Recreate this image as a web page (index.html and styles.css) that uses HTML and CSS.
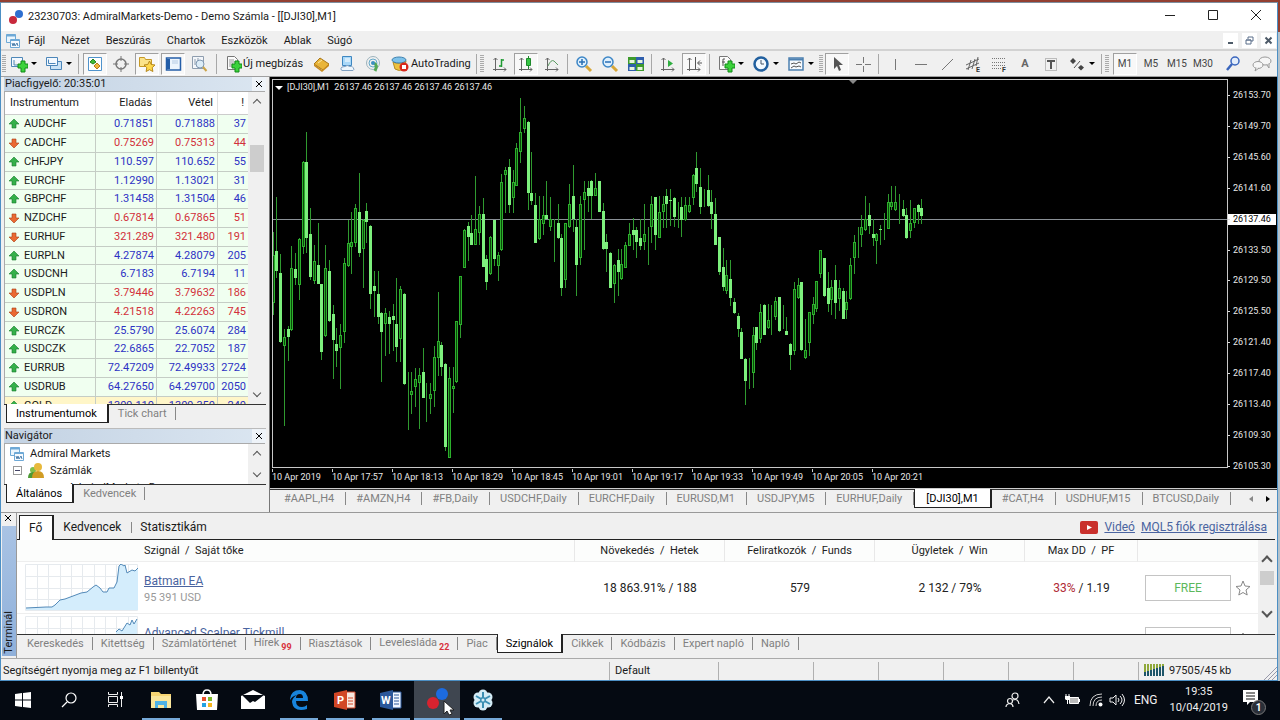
FILE: index.html
```html
<!DOCTYPE html>
<html lang="hu">
<head>
    <meta charset="UTF-8">
    <title>23230703: AdmiralMarkets-Demo - Demo Számla - [[DJI30],M1]</title>
    <link rel="stylesheet" href="styles.css">
</head>
<body>
<div class="window">
    <header class="titlebar">
        <svg class="logo" width="14" height="14"><circle cx="10" cy="4" r="4" fill="#2f6fd0"/><circle cx="4" cy="10" r="4" fill="#c8283c"/></svg>
        <span class="title">23230703: AdmiralMarkets-Demo - Demo Számla - [[DJI30],M1]</span>
        <div class="win-btns">
            <button aria-label="Minimize"><svg width="12" height="12"><path d="M1 6.500h10" stroke="#222"/></svg></button>
            <button aria-label="Maximize"><svg width="12" height="12"><path d="M1.500 1.500h9v9h-9z" fill="none" stroke="#222"/></svg></button>
            <button aria-label="Close"><svg width="12" height="12"><path d="M1 1l10 10M11 1L1 11" stroke="#222"/></svg></button>
        </div>
    </header>
    <nav class="menu">
        <svg class="menu-icon" width="14" height="14"><use href="#i-charts"/></svg>
        <a href="#">Fájl</a><a href="#">Nézet</a><a href="#">Beszúrás</a><a href="#">Chartok</a><a href="#">Eszközök</a><a href="#">Ablak</a><a href="#">Súgó</a>
        <div class="mdi-btns">
            <button aria-label="Minimize chart"><svg width="9" height="9"><path d="M2 7h5" stroke="#4d5a68" stroke-width="2"/></svg></button>
            <button aria-label="Restore chart"><svg width="9" height="9"><path d="M3 3V1h5v4H6M1 4h5v4H1zM1 4h5" fill="none" stroke="#5b6f8a"/></svg></button>
            <button aria-label="Close chart"><svg width="9" height="9"><path d="M1.500 1.500l6 6M7.500 1.500l-6 6" stroke="#4d5a68" stroke-width="2"/></svg></button>
        </div>
    </nav>

    <div class="toolbar">
        <i class="grip"></i>
        <button class="tool drop" aria-label="New chart"><svg width="18" height="18"><path d="M1.500 2.500h11v9h-11zM4 5v5h6" fill="#f3f9ff" stroke="#4f88b8"/><path d="M8 9h3V6h4v3h3v4h-3v4h-4v-4H8z" fill="#3bd23b" stroke="#128a18"/></svg></button>
        <button class="tool drop" aria-label="Profiles"><svg width="18" height="18"><path d="M5.500 6.500h11v8h-11z" fill="#c9e2f6" stroke="#4c86b9"/><path d="M1.500 2.500h11v8h-11z" fill="#f3f9ff" stroke="#4c86b9"/><path d="M3.500 4.500v4h7" fill="none" stroke="#4c86b9"/></svg></button>
        <i class="sep"></i>
        <button class="tool on" aria-label="Market Watch"><svg width="18" height="18"><path d="M2.500 2.500h13v13h-13z" fill="#fff" stroke="#4f93cc"/><path d="M7 4l3 3-3 2-3-2z" fill="#3fbb36" stroke="#24831f"/><path d="M11 8l3 3-3 3-3-3z" fill="#f0b53c" stroke="#b8781b"/></svg></button>
        <button class="tool" aria-label="Data Window"><svg width="18" height="18"><g fill="none" stroke="#777"><circle cx="9" cy="9" r="5" stroke-width="1.500"/><path d="M9 1v5M9 12v5M1 9h5M12 9h5"/></g></svg></button>
        <button class="tool on" aria-label="Navigator"><svg width="18" height="18"><path d="M1.500 2.500h5l1 2h6v7h-12z" fill="#fbe38a" stroke="#c69926"/><path d="M11.500 6l1.700 3.500 3.800.5-2.800 2.700.7 3.800-3.400-1.800-3.400 1.800.7-3.800L6 10l3.800-.5z" fill="#ffd94d" stroke="#b6881c"/></svg></button>
        <button class="tool on" aria-label="Terminal"><svg width="18" height="18"><path d="M2.500 3h14v12h-14z" fill="#edf5fd" stroke="#245ea8" stroke-width="1.500"/><path d="M3 4h3v10H3z" fill="#245ea8"/><path d="M8 6h6M8 8h6" stroke="#b5cbe4"/></svg></button>
        <button class="tool" aria-label="Strategy Tester"><svg width="18" height="18"><path d="M2.500 1.500h11v12h-11z" fill="#f3f6fa" stroke="#8e9dae"/><path d="M5 4v6M8 3v5" stroke="#8e9dae"/><circle cx="10" cy="9" r="4" fill="#dcecf7" stroke="#7f97b0"/><path d="M13 12l3.500 4" stroke="#cba448" stroke-width="2"/></svg></button>
        <i class="sep wide"></i>
        <button class="tool text" aria-label="Új megbízás"><svg width="18" height="18"><path d="M3.500 1.500h7l3 3v10h-10z" fill="#fbfbfb" stroke="#777"/><path d="M5 5h5M5 7h6M5 9h4M5 11h3" stroke="#999"/><path d="M8 9h3V6h4v3h3v4h-3v4h-4v-4H8z" fill="#3bd23b" stroke="#128a18"/></svg><span>Új megbízás</span></button>
        <button class="tool" aria-label="MetaEditor"><svg width="18" height="18"><path d="M2 9l6-6 9 6-6 6z" fill="#e9b53a" stroke="#a87618"/><path d="M2 9v2l8 6 7-6V9l-7 6z" fill="#c98c20"/><path d="M6 8l4-3" stroke="#fbe9a6"/></svg></button>
        <button class="tool" aria-label="VPS"><svg width="18" height="18"><path d="M4.500 1.500h9v9h-9z" fill="#a9d8f8" stroke="#3e87c1"/><path d="M7 4h5M7 6h5" stroke="#fff"/><path d="M4 15.500h11q2-1 0-3-1-2-3-1-3-2-5 0-4 0-4 2 0 2 1 2z" fill="#eef6fc" stroke="#7f9fc0"/></svg></button>
        <button class="tool" aria-label="Signals"><svg width="18" height="18"><g fill="none" stroke="#9db3bd"><circle cx="9" cy="8" r="6.500"/><circle cx="9" cy="8" r="4" stroke="#64a9c9"/></g><path d="M10 8q4 2 1 8" fill="none" stroke="#54a854" stroke-width="3"/><circle cx="9" cy="8" r="2" fill="#3d8fc0"/></svg></button>
        <button class="tool text auto" aria-label="AutoTrading"><svg width="18" height="18"><path d="M2 7q6 3 13-1l-2 8q-5 3-9 0z" fill="#eec23f" stroke="#b68a20"/><ellipse cx="8" cy="5" rx="7" ry="3" fill="#7ec2ea" stroke="#3e82b0"/><circle cx="13" cy="12" r="4.500" fill="#d8281c"/><path d="M11 10h4v4h-4z" fill="#fff"/></svg><span>AutoTrading</span></button>
        <i class="sep"></i><i class="grip"></i>
        <button class="tool" aria-label="Bar chart"><svg width="18" height="18"><use href="#i-axes"/><path d="M10.500 4v8M10 5h3M8 11h3" stroke="#1f9a33" stroke-width="1.500"/></svg></button>
        <button class="tool on" aria-label="Candlesticks"><svg width="18" height="18"><use href="#i-axes"/><path d="M11.500 1v13" stroke="#1f8a2c"/><path d="M9.500 3.500h4v7h-4z" fill="#35c544" stroke="#1f8a2c"/></svg></button>
        <button class="tool" aria-label="Line chart"><svg width="18" height="18"><use href="#i-axes"/><path d="M5 11Q8 4 11 6l4 4" fill="none" stroke="#5c9a62"/></svg></button>
        <i class="sep"></i>
        <button class="tool" aria-label="Zoom in"><svg width="18" height="18"><use href="#i-lens"/><path d="M7 4v6M4 7h6" stroke="#2a6fb4" stroke-width="1.500"/></svg></button>
        <button class="tool" aria-label="Zoom out"><svg width="18" height="18"><use href="#i-lens"/><path d="M4 7h6" stroke="#2a6fb4" stroke-width="1.500"/></svg></button>
        <button class="tool" aria-label="Tile windows"><svg width="18" height="18"><path d="M1 2h8v7H1zM9 9h8v7H9z" fill="#3d9a2c"/><path d="M9 2h8v7H9zM1 9h8v7H1z" fill="#2e5eac"/><path d="M2.500 5h5v3h-5zM10.500 5h5v3h-5zM2.500 12h5v3h-5zM10.500 12h5v3h-5z" fill="#e8f4dd"/></svg></button>
        <i class="sep"></i>
        <button class="tool" aria-label="Auto scroll"><svg width="18" height="18"><use href="#i-axes"/><path d="M9 5l5 3.500L9 12z" fill="#2fae40"/></svg></button>
        <button class="tool on" aria-label="Chart shift"><svg width="18" height="18"><use href="#i-axes"/><path d="M10.500 2v12M17 8h-4M15 5.500L12.500 8l2.500 2.500" fill="none" stroke="#555"/></svg></button>
        <i class="sep"></i>
        <button class="tool drop" aria-label="Indicators"><svg width="18" height="18"><path d="M2.500 1.500h8l3 3v10h-11z" fill="#fbfbfb" stroke="#777"/><path d="M8 4H6v7M5 7h3" fill="none" stroke="#555"/><path d="M8 9h3V6h4v3h3v4h-3v4h-4v-4H8z" fill="#3bd23b" stroke="#128a18"/></svg></button>
        <button class="tool drop" aria-label="Periods"><svg width="18" height="18"><circle cx="9" cy="9" r="6.500" fill="#f4faff" stroke="#22609f" stroke-width="2.500"/><path d="M9 5v4h3" fill="none" stroke="#456"/></svg></button>
        <button class="tool drop" aria-label="Templates"><svg width="18" height="18"><path d="M2 3h14v12H2z" fill="#f7fbff" stroke="#4c80b0" stroke-width="1.500"/><path d="M2 4.500h14" stroke="#4c80b0" stroke-width="2"/><path d="M4 9l3-1 2 1 3-2 2 1M4 13l3-2 2 1 3-1 2 1" fill="none" stroke="#555"/></svg></button>
        <i class="grip near"></i>
        <button class="tool on" aria-label="Cursor"><svg width="18" height="18"><path d="M6 2v12l3-3 2 5 2-1-2-5h4z" fill="#555"/></svg></button>
        <button class="tool" aria-label="Crosshair"><svg width="18" height="18"><path d="M9.500 2v6M9.500 11v6M2 9.500h6M11 9.500h6" stroke="#777"/></svg></button>
        <i class="sep"></i>
        <button class="tool" aria-label="Vertical line"><svg width="18" height="18"><path d="M9.500 4v11" stroke="#777"/></svg></button>
        <button class="tool" aria-label="Horizontal line"><svg width="18" height="18"><path d="M3 9.500h12" stroke="#777"/></svg></button>
        <button class="tool" aria-label="Trendline"><svg width="18" height="18"><path d="M4 15L15 4" stroke="#777"/></svg></button>
        <button class="tool" aria-label="Channel"><svg width="18" height="18"><path d="M2 10L15 4M2 14L15 8M4 15l3-10M8 14l3-10M12 11l2-9" stroke="#666"/><text x="12" y="17" class="tiny">E</text></svg></button>
        <button class="tool" aria-label="Fibonacci"><svg width="18" height="18"><path d="M2 3.500h13M2 7.500h13M2 10.500h13M2 13.500h9" stroke="#777" stroke-dasharray="1 1"/><text x="12" y="17" class="tiny">F</text></svg></button>
        <button class="tool letter">A</button>
        <button class="tool" aria-label="Text label"><svg width="18" height="18"><path d="M3.500 3.500h11v12h-11z" fill="none" stroke="#888" stroke-dasharray="1 1"/><path d="M5 6h8M9 6v8" stroke="#555" stroke-width="2"/></svg></button>
        <button class="tool drop" aria-label="Arrows"><svg width="18" height="18"><path d="M5 3l3 3-3 3-3-3zM13 10l3 2.500-3 3-3-3z" fill="#444"/><path d="M6 13l6-7" stroke="#555"/></svg></button>
        <i class="sep"></i><i class="grip"></i>
        <button class="tool on period">M1</button><button class="tool period">M5</button><button class="tool period">M15</button><button class="tool period">M30</button>
        <div class="toolbar-end">
            <button class="tool" aria-label="Search"><svg width="18" height="18"><circle cx="11" cy="6" r="4" fill="#e4eefb" stroke="#3a66bd" stroke-width="1.500"/><path d="M8 9l-5 6" stroke="#3a66bd" stroke-width="2.500"/></svg></button>
            <button class="tool" aria-label="Chat"><svg width="20" height="18"><g fill="#f6f6f6" stroke="#999"><ellipse cx="13" cy="6" rx="6" ry="4"/><path d="M15 10l2 3 0-4"/><ellipse cx="6" cy="10" rx="5" ry="3.500"/><path d="M4 13l-1 3 4-3"/></g></svg></button>
        </div>
    </div>

    <div class="workspace">
        <aside class="side">
            <section class="panel watch">
                <h2 class="panel-title">Piacfigyelő: 20:35:01<button class="x" aria-label="Close"></button></h2>
                <div class="panel-body">
                    <div class="watch-list">
                        <table class="quotes">
                            <colgroup><col><col class="c-bid"><col class="c-ask"><col class="c-spread"></colgroup>
                            <thead><tr><th>Instrumentum</th><th>Eladás</th><th>Vétel</th><th>!</th></tr></thead>
                            <tbody id="quotes"></tbody>
                        </table>
                    </div>
                    <div class="scroll"><i class="up"></i><i class="thumb"></i><i class="down"></i></div>
                </div>
                <div class="tabs"><button class="tab active">Instrumentumok</button><button class="tab">Tick chart</button></div>
            </section>
            <section class="panel navigator">
                <h2 class="panel-title">Navigátor<button class="x" aria-label="Close"></button></h2>
                <div class="panel-body">
                    <ul class="tree">
                        <li><svg width="14" height="14"><use href="#i-charts"/></svg>Admiral Markets</li>
                        <li class="lvl1"><i class="box"></i><svg width="16" height="16"><circle cx="5" cy="7" r="3" fill="#7fbf4a"/><path d="M0 15q0-6 5-6t5 6z" fill="#4d9a34"/><circle cx="10" cy="4" r="4" fill="#e8b93c"/><path d="M4 15q0-7 6-7t6 7z" fill="#d19c24"/></svg>Számlák</li>
                        <li class="lvl2"><svg width="12" height="14"><path d="M1 3h10v9H1z" fill="#3f91cd"/></svg>AdmiralMarkets-Demo</li>
                    </ul>
                    <div class="scroll"><i class="up"></i><i class="down"></i></div>
                </div>
                <div class="tabs"><button class="tab active">Általános</button><button class="tab">Kedvencek</button></div>
            </section>
        </aside>

        <main class="chart-area">
            <div class="chart">
                <div class="plot">
                    <svg id="candles" width="100%" height="100%"></svg>
                    <p class="ohlc"><i class="caret"></i>[DJI30],M1&nbsp; 26137.46 26137.46 26137.46 26137.46</p>
                    <i class="shift-mark"></i>
                </div>
                <ol class="prices" id="prices"></ol>
                <ol class="times" id="times"></ol>
            </div>
            <div class="tabs chart-tabs">
                <button class="tab">#AAPL,H4</button><button class="tab">#AMZN,H4</button><button class="tab">#FB,Daily</button><button class="tab">USDCHF,Daily</button><button class="tab">EURCHF,Daily</button><button class="tab">EURUSD,M1</button><button class="tab">USDJPY,M5</button><button class="tab">EURHUF,Daily</button><button class="tab active">[DJI30],M1</button><button class="tab">#CAT,H4</button><button class="tab">USDHUF,M15</button><button class="tab">BTCUSD,Daily</button>
                <span class="tab-nav"><button class="prev" aria-label="Previous"></button><button class="next" aria-label="Next"></button></span>
            </div>
        </main>
    </div>

    <section class="terminal">
        <div class="strip"><button class="x" aria-label="Close"></button><span>Terminál</span></div>
        <div class="terminal-main">
            <div class="sub-tabs">
                <button class="active">Fő</button><button>Kedvencek</button><button>Statisztikám</button>
                <div class="links">
                    <svg width="18" height="13"><rect width="18" height="13" rx="2" fill="#c9302c"/><path d="M7 4l5 2.500L7 9z" fill="#fff"/></svg>
                    <a href="#">Videó</a><a href="#">MQL5 fiók regisztrálása</a>
                </div>
            </div>
            <div class="signals">
                <div class="signal-list">
                    <table>
                        <colgroup><col class="c-spark"><col><col class="c-num"><col class="c-num"><col class="c-num"><col class="c-dd"><col class="c-act"></colgroup>
                        <thead><tr><th></th><th class="name">Szignál &nbsp;/ &nbsp;Saját tőke</th><th>Növekedés &nbsp;/ &nbsp;Hetek</th><th>Feliratkozók &nbsp;/ &nbsp;Funds</th><th>Ügyletek &nbsp;/ &nbsp;Win</th><th>Max DD &nbsp;/ &nbsp;PF</th><th></th></tr></thead>
                        <tbody>
                        <tr>
                            <td class="spark"><svg width="114" height="47"><use href="#i-grid"/><path d="M1 44l20-1h6l3-2 5-5 5-1 8-3 8-3 6-1 6-5 3-2 4 3 3 4h4l2-4h5l3-6 2-16 2-2 3 2 1-1 2 8 5-3 3 1 3-3V46H1z" fill="#d4edfc"/><path d="M1 44l20-1h6l3-2 5-5 5-1 8-3 8-3 6-1 6-5 3-2 4 3 3 4h4l2-4h5l3-6 2-16 2-2 3 2 1-1 2 8 5-3 3 1 3-3" fill="none" stroke="#5289b8"/></svg></td>
                            <td class="name"><a href="#">Batman EA</a><small>95 391 USD</small></td>
                            <td>18 863.91% / 188</td><td>579</td><td>2 132 / 79%</td><td><em>33%</em> / 1.19</td>
                            <td class="act"><div><button class="free">FREE</button><svg width="16" height="16"><use href="#i-star"/></svg></div></td>
                        </tr>
                        <tr>
                            <td class="spark"><svg width="114" height="47"><use href="#i-grid"/><path d="M91 16l3-3 3 2 5-8 3 2 2-5 2 4 3-5v40H91z" fill="#d4edfc"/><path d="M91 16l3-3 3 2 5-8 3 2 2-5 2 4 3-5" fill="none" stroke="#5289b8"/></svg></td>
                            <td class="name"><a href="#">Advanced Scalper Tickmill</a></td>
                            <td></td><td></td><td></td><td></td>
                            <td class="act"><div><button class="free" aria-label="Subscribe"></button><svg width="16" height="16"><use href="#i-star"/></svg></div></td>
                        </tr>
                        </tbody>
                    </table>
                </div>
                <div class="scroll bold"><i class="up"></i><i class="thumb"></i><i class="down"></i></div>
            </div>
            <div class="tabs">
                <button class="tab">Kereskedés</button><button class="tab">Kitettség</button><button class="tab">Számlatörténet</button><button class="tab">Hírek<b>99</b></button><button class="tab">Riasztások</button><button class="tab">Levelesláda<b>22</b></button><button class="tab">Piac</button><button class="tab active">Szignálok</button><button class="tab">Cikkek</button><button class="tab">Kódbázis</button><button class="tab">Expert napló</button><button class="tab">Napló</button>
            </div>
        </div>
    </section>

    <footer class="status">
        <span class="hint">Segítségért nyomja meg az F1 billentyűt</span>
        <span class="cell profile">Default</span><span class="cell date"></span><span class="cell"></span><span class="cell"></span><span class="cell"></span><span class="cell"></span><span class="cell"></span>
        <span class="cell traffic"><svg width="22" height="13"><path d="M0 0h2v8H0zM3 0h2v7H3zM6 0h2v6H6zM9 0h2v5H9zM12 0h2v4h-2zM15 0h2v3h-2zM18 0h2v2h-2z" fill="#8fa83a"/><path d="M0 8h2v4H0zM3 7h2v5H3zM6 6h2v6H6zM9 5h2v7H9zM12 4h2v8h-2zM15 3h2v9h-2zM18 2h2v10h-2z" fill="#1d5569"/></svg>97505/45 kb</span>
        <svg class="resize" width="13" height="13"><path d="M0 13L13 0M4 13l9-9M8 13l5-5" stroke="#99a"/></svg>
    </footer>
</div>

<div class="taskbar">
    <button aria-label="Start"><svg width="16" height="16"><path d="M0 2l7-1v6.500H0zM8 1l8-1v7.500H8zM0 8.500h7V15l-7-1zM8 8.500h8V16l-8-1z" fill="#fff"/></svg></button>
    <button aria-label="Search"><svg width="16" height="16"><circle cx="10" cy="6" r="5" fill="none" stroke="#fff" stroke-width="1.200"/><path d="M6 10l-5 5" stroke="#fff" stroke-width="1.200"/></svg></button>
    <button aria-label="Task View"><svg width="17" height="16"><path d="M1.500 4.500h9v6h-9zM1.500 0v2.500h9V0M1.500 15v-2.500h9V15M14.500 0v15" fill="none" stroke="#eee"/><path d="M13 4h3v3h-3z" fill="#fff"/></svg></button>
    <button class="open" aria-label="File Explorer"><svg width="20" height="18"><path d="M0 1h8l2 2h10v14H0z" fill="#f6d573"/><path d="M0 5h20v12H0z" fill="#fae69c"/><path d="M4 10h12v7h-3v-3H7v3H4z" fill="#4fb2e5"/></svg></button>
    <button aria-label="Store"><svg width="22" height="22"><path d="M7 6q0-5 4-5t4 5" fill="none" stroke="#fff" stroke-width="1.500"/><path d="M0 5h22l-1 16H1z" fill="#fff"/><path d="M6 8h4v4H6z" fill="#e8502c"/><path d="M12 8h4v4h-4z" fill="#7db928"/><path d="M6 14h4v4H6z" fill="#23a2e3"/><path d="M12 14h4v4h-4z" fill="#f7b51d"/></svg></button>
    <button aria-label="Mail"><svg width="24" height="19"><path d="M0 6l12-6 12 6v13H0z" fill="#fff"/><path d="M1 5h22l-9 7-2-1-3 2z" fill="#050a12"/></svg></button>
    <button class="open" aria-label="Edge"><svg width="20" height="20" viewBox="0 0 20 20"><path d="M1 9Q2 0 11 0q8 1 8 11H7q0 6 6 6 3 0 5-2v4q-3 1-6 1-8 0-9-8 0-4 5-7-5 1-7 5zm6-1h7q0-4-3-4-4 0-4 4z" fill="#1884dc" fill-rule="evenodd"/></svg></button>
    <button class="open" aria-label="PowerPoint"><svg width="22" height="20"><path d="M10 2h11v16H10z" fill="#f8e8e0" stroke="#d24726"/><path d="M14 8h5M14 11h5M14 14h5" stroke="#d24726"/><path d="M0 3l13-3v20L0 17z" fill="#d24726"/><text x="3" y="14" class="app">P</text></svg></button>
    <button class="open" aria-label="Word"><svg width="22" height="20"><path d="M10 2h11v16H10z" fill="#f0f5ff" stroke="#2b579a"/><path d="M14 5h5M14 8h5M14 11h5M14 14h5" stroke="#2b579a"/><path d="M0 3l13-3v20L0 17z" fill="#2b579a"/><text x="1" y="14" class="app">W</text></svg></button>
    <button class="open current" aria-label="MetaTrader"><svg width="34" height="32"><circle cx="22" cy="10" r="6" fill="#1c6be0"/><circle cx="13" cy="19" r="6" fill="#d8232f"/><path d="M24 17v13l3-3 2 4 3-1-2-4h4z" fill="#fff" stroke="#222"/></svg></button>
    <button class="open" aria-label="GoToMeeting"><svg width="22" height="22"><g fill="#d4ecf6"><circle cx="11" cy="5" r="4.500"/><circle cx="16" cy="8" r="4.500"/><circle cx="16" cy="14" r="4.500"/><circle cx="11" cy="17" r="4.500"/><circle cx="6" cy="14" r="4.500"/><circle cx="6" cy="8" r="4.500"/></g><path d="M11 3v16M4 7l14 8M18 7L4 15" stroke="#3b8fb3" stroke-width="2"/><circle cx="11" cy="11" r="3" fill="#3b8fb3"/><circle cx="11" cy="11" r="1.500" fill="#d4ecf6"/></svg></button>
    <div class="tray">
        <svg width="16" height="16"><g fill="none" stroke="#eee" stroke-width="1.200"><circle cx="10" cy="4" r="3"/><circle cx="5" cy="9" r="2.500"/><path d="M1 15q0-3 4-3.500 3 .5 3 3.500M8 8q5-2 6 4"/></g></svg>
        <svg class="chev" width="12" height="12"><path d="M1 9l5-6 5 6" fill="none" stroke="#eee" stroke-width="1.200"/></svg>
        <svg class="batt" width="16" height="12"><path d="M5.500 3.500h9v6h-9z" fill="#bbb" stroke="#fff"/><path d="M15 5h1v3h-1zM1 2h5v3l-1 1H2L1 5z" fill="#fff"/><path d="M2 0v2M5 0v2M3.500 6v4" stroke="#fff"/></svg>
        <svg class="wifi" width="14" height="14"><g fill="none" stroke="#ccc"><path d="M1 13Q1 1 13 1M4 13q0-9 9-9M7 13q0-6 6-6"/></g><circle cx="11.500" cy="11.500" r="2" fill="#fff"/></svg>
        <svg class="vol" width="16" height="14"><g fill="none" stroke="#eee"><path d="M1 5h3l3-3v10L4 9H1zM9 5q2 2 0 4M11 3q4 4 0 8M13 1q5 6 0 12"/></g></svg>
        <span class="lang">ENG</span>
        <time class="clock">19:35<br>10/04/2019</time>
        <button class="notice" aria-label="Notifications"><svg width="24" height="24"><path d="M1 2h15v12H8l-3 3v-3H1z" fill="#fff"/><path d="M4 5h9M4 8h9M4 11h9" stroke="#111"/></svg><b>1</b></button>
    </div>
</div>

<svg class="defs" width="0" height="0">
    <symbol id="i-charts" viewBox="0 0 14 14"><path d="M.5.5h9v8h-9z" fill="#eaf5fd" stroke="#6ea9d6"/><path d="M.5 1.500h9" stroke="#6ea9d6" stroke-width="2"/><path d="M4.500 5.500h9v8h-9z" fill="#f7fbff" stroke="#6ea9d6"/><path d="M4.500 6.500h9" stroke="#6ea9d6"/><path d="M6 9l1 3 1-3 1 3 2-3 1 3" fill="none" stroke="#4f81ad"/></symbol>
    <symbol id="i-axes" viewBox="0 0 18 18"><path d="M4.500 3v13M2 14.500h13M2.500 5l2-2 2 2M13 12.500l2 2-2 2" fill="none" stroke="#666"/></symbol>
    <symbol id="i-lens" viewBox="0 0 18 18"><path d="M11 11l5 5" stroke="#d8a738" stroke-width="3"/><circle cx="7" cy="7" r="5" fill="#dff0fd" stroke="#3d86c6" stroke-width="1.500"/></symbol>
    <symbol id="i-grid" viewBox="0 0 114 47"><path d="M.5.5h112v46H.5zM12.500 0v47M23.500 0v47M35.500 0v47M46.500 0v47M57.500 0v47M69.500 0v47M80.500 0v47M91.500 0v47M103.500 0v47M0 12.500h113M0 24.500h113M0 35.500h113" fill="none" stroke="#e6eaee"/></symbol>
    <symbol id="i-star" viewBox="0 0 16 16"><path d="M8 1l2 5 5 .5-4 3.500 1.200 5L8 12.500 3.800 15 5 10 1 6.500 6 6z" fill="none" stroke="#888"/></symbol>
</svg>

<script src="app.js"></script>
</body>
</html>
```
FILE: styles.css
```css
* {
    box-sizing: border-box;
    margin: 0;
    padding: 0;
}
body {
    height: 100vh;
    min-height: 640px;
    display: flex;
    flex-direction: column;
    padding-top: 2px;
    background: linear-gradient(#933f31 32px, #b4c2cc 32px);
    font: 11px/14px Roboto, "Open Sans", sans-serif;
    color: #1a1a1a;
    overflow: hidden;
}
button {
    border: none;
    background: none;
    font: inherit;
    color: inherit;
}
ul, ol {
    list-style: none;
}
a {
    color: #4a64a0;
}
.window {
    flex: 1;
    min-height: 0;
    display: flex;
    flex-direction: column;
    margin-right: 2px;
    border: 1px solid #4c8fc4;
    border-top-color: #7d8fa0;
    background: #f0f0f0;
}
.defs {
    position: absolute;
}

/* title and menu */
.titlebar {
    display: flex;
    align-items: center;
    height: 28px;
    padding-left: 8px;
    background: #fff;
}
.title {
    flex: 1;
    margin-left: 5px;
}
.win-btns {
    display: flex;
}
.win-btns button {
    width: 43px;
    height: 28px;
}
.menu {
    display: flex;
    align-items: center;
    height: 20px;
    padding: 1px 0 0 5px;
    border-bottom: 2px solid #d2d2d2;
}
.menu a {
    margin-right: 16px;
    color: #1a1a1a;
    text-decoration: none;
}
.menu-icon {
    margin-right: 8px;
}
.mdi-btns {
    display: flex;
    gap: 4px;
    margin-left: auto;
    margin-right: 1px;
}
.mdi-btns button {
    width: 15px;
    height: 15px;
    background: #fff;
}
.mdi-btns svg {
    display: block;
    margin: 0 auto;
}

/* toolbar */
.toolbar {
    display: flex;
    align-items: center;
    height: 26px;
    padding-left: 1px;
    border-bottom: 1px solid #a0a0a0;
    background: #f0f0f0;
}
.grip {
    width: 4px;
    height: 18px;
    background: repeating-linear-gradient(#aaa 0 1px, #f0f0f0 1px 2px);
}
.grip.near {
    margin: 0 1px;
}
.sep {
    width: 1px;
    height: 20px;
    margin: 0 3px 0 2px;
    background: #a8a8a8;
}
.sep.wide {
    margin: 0 3px 0 4px;
}
.sep + .grip {
    margin-right: 3px;
}
.tool {
    flex: none;
    width: 26px;
    height: 22px;
    display: flex;
    align-items: center;
    justify-content: center;
    border: 1px solid transparent;
}
.tool.on {
    width: 24px;
    margin: 0 1px;
    background: #f8f8f8;
    border-color: #a0a0a0 #fff #fff #a0a0a0;
}
.tool.drop {
    width: 35px;
    gap: 3px;
}
.tool.drop::after {
    content: "";
    border: 3px solid transparent;
    border-top: 3px solid #000;
    border-bottom: none;
}
.tool.text {
    width: 88px;
    padding-left: 3px;
    justify-content: flex-start;
    gap: 1px;
    white-space: nowrap;
}
.tool.auto {
    padding-left: 4px;
    gap: 2px;
}
.tool.letter {
    font-weight: bold;
    color: #666;
}
.tool.period {
    font-size: 10px;
    color: #444;
}
.toolbar-end {
    display: flex;
    gap: 3px;
    margin-left: auto;
    margin-right: 2px;
}
.tiny {
    font: bold 7px Roboto, sans-serif;
    fill: #333;
}

/* side panels */
.workspace {
    flex: 1;
    min-height: 0;
    display: flex;
}
.side {
    flex: none;
    width: 265px;
    padding: 0 0 6px 3px;
    display: flex;
    flex-direction: column;
}
.panel {
    display: flex;
    flex-direction: column;
    min-height: 0;
}
.watch {
    flex: 1;
}
.navigator {
    height: 78px;
    margin-top: 2px;
    border-top: 1px solid #bbb;
}
.panel-title {
    display: flex;
    justify-content: space-between;
    align-items: center;
    flex: none;
    height: 14px;
    padding-left: 1px;
    background: linear-gradient(90deg, #c3d2e3, #dbe6f1);
    font-size: 11px;
    font-weight: normal;
}
.x {
    width: 14px;
    height: 14px;
    background:
        linear-gradient(45deg, transparent 42%, #000 42% 58%, transparent 58%) center / 6px 6px no-repeat,
        linear-gradient(-45deg, transparent 42%, #000 42% 58%, transparent 58%) center / 6px 6px no-repeat;
}
.panel-title .x {
    background-color: #eef3f8;
}
.panel-body {
    flex: 1;
    min-height: 0;
    display: flex;
    margin-right: 1px;
    border: 1px solid #aaa;
    border-right: none;
    border-bottom: none;
    background: #fff;
}
.watch-list {
    flex: 1;
    overflow: hidden;
}
.quotes {
    width: 100%;
    table-layout: fixed;
    border-collapse: separate;
    border-spacing: 0;
}
.c-bid, .c-ask {
    width: 61px;
}
.c-spread {
    width: 30px;
}
.quotes th {
    height: 23px;
    padding: 0 4px 0 0;
    border-right: 1px solid #e2e2e2;
    border-bottom: 1px solid #ccc;
    font-weight: normal;
    text-align: right;
}
.quotes th:first-child {
    padding-left: 5px;
    text-align: left;
}
.quotes td {
    height: 19px;
    padding-right: 2px;
    border-right: 1px solid #c5cdc5;
    border-bottom: 1px solid #c5cdc5;
    background: #f0fff0;
    color: #2d32c4;
    text-align: right;
}
.quotes tr:nth-child(4n) td {
    height: 18px;
}
.quotes td:first-child {
    padding-left: 4px;
    color: #1a1a1a;
    text-align: left;
}
.quotes td:last-child, .quotes th:last-child {
    border-right: none;
}
.quotes td svg {
    margin-right: 5px;
    vertical-align: -2px;
}
.quotes .down td:not(:first-child) {
    color: #d2303a;
}
.quotes .gold td {
    background: #fff6c8;
}
.scroll {
    flex: none;
    width: 17px;
    padding: 4px 0;
    display: flex;
    flex-direction: column;
    align-items: center;
    background: #f0f0f0;
}
.scroll .up, .scroll .down {
    width: 6px;
    height: 6px;
    border: solid #555;
    border-width: 1px 0 0 1px;
    transform: rotate(45deg);
    margin-top: 4px;
}
.scroll .down {
    margin: auto 0 4px;
    transform: rotate(225deg);
}
.scroll .thumb {
    width: 14px;
    height: 27px;
    margin-top: 39px;
    background: #cdcdcd;
}
.scroll.bold .up, .scroll.bold .down {
    width: 8px;
    height: 8px;
    border-width: 2px 0 0 2px;
}
.scroll.bold .up {
    margin-top: 13px;
}
.scroll.bold .down {
    margin-bottom: 14px;
}
.scroll.bold .thumb {
    height: 14px;
    margin-top: 6px;
}
.tree {
    flex: 1;
    overflow: hidden;
    padding: 1px 5px;
}
.tree li {
    display: flex;
    align-items: center;
    gap: 6px;
    height: 17px;
}
.tree .lvl1 {
    padding-left: 3px;
}
.tree .lvl2 {
    padding-left: 40px;
}
.tree .box {
    width: 9px;
    height: 9px;
    border: 1px solid #999;
    background: linear-gradient(#446, #446) center / 5px 1px no-repeat;
}

/* tabs */
.tabs {
    flex: none;
    display: flex;
    height: 22px;
    padding-left: 2px;
    border-top: 1px solid #333;
    color: #808080;
}
.tab {
    position: relative;
    height: 18px;
    padding: 0 9px;
    white-space: nowrap;
}
.tab::after {
    content: "";
    position: absolute;
    right: 0;
    top: 2px;
    height: 13px;
    border-right: 1px solid #888;
}
.tab.active {
    margin-top: -1px;
    height: 19px;
    border: 1px solid #222;
    border-top: none;
    border-right-width: 2px;
    background: #fff;
    color: #000;
    padding: 1px 8px 0;
}
.side .tab.active {
    padding: 1px 10px 0 9px;
}
.tab.active::after {
    display: none;
}
.tab b {
    display: inline-block;
    margin-left: 2px;
    vertical-align: -4px;
    font-size: 9px;
    line-height: 9px;
    color: #d8303c;
}

/* chart */
.chart-area {
    flex: 1;
    min-width: 0;
    margin-left: 3px;
    display: flex;
    flex-direction: column;
    border-left: 1px solid #777;
}
.chart {
    flex: 1;
    min-height: 0;
    display: grid;
    grid-template: 1fr 19px / 1fr 48px;
    padding: 2px 1px 1px 2px;
    background: #000;
    border-bottom: 1px solid #ccc;
    color: #e8e8e8;
    font-size: 9px;
    line-height: 11px;
}
.plot {
    position: relative;
    min-height: 0;
    border: 1px solid #c8c8c8;
    overflow: hidden;
}
#candles {
    display: block;
}
.ohlc {
    position: absolute;
    left: 2px;
    top: 2px;
    display: flex;
    align-items: center;
    gap: 4px;
}
.caret, .shift-mark {
    border: 4px solid transparent;
    border-top-color: #fff;
    border-bottom: none;
}
.shift-mark {
    position: absolute;
    right: 370px;
    top: 0;
    border-top-color: #888;
}
.prices {
    display: flex;
    flex-direction: column;
    justify-content: space-between;
    padding-top: 11px;
    margin-bottom: -4px;
}
.prices li {
    display: flex;
    align-items: center;
    white-space: nowrap;
}
.prices li::before {
    content: "";
    width: 2px;
    margin-right: 3px;
    border-top: 1px solid #ddd;
}
.prices .now {
    background: #fff;
    color: #000;
}
.times {
    grid-column: 1 / 3;
    display: flex;
}
.times li {
    flex: none;
    width: 60px;
    padding-top: 1px;
    white-space: nowrap;
}
.times li::before {
    content: "";
    display: block;
    height: 3px;
    border-left: 1px solid #ccc;
}
.chart-tabs {
    height: 23px;
    padding-left: 4px;
}
.chart-tabs .tab {
    padding: 0 12px 0 10px;
}
.chart-tabs .tab.active {
    padding: 1px 11px 0;
}
.tab-nav {
    margin-left: auto;
    display: flex;
    align-items: center;
    gap: 13px;
    height: 17px;
    padding-right: 7px;
}
.prev, .next {
    border: 3px solid transparent;
    border-right: 4px solid #888;
    border-left: none;
}
.next {
    border-left: 4px solid #000;
    border-right: none;
}

/* terminal */
.terminal {
    flex: none;
    display: flex;
    height: 146px;
    border-top: 1px solid #999;
}
.terminal .tabs {
    height: 24px;
}
.terminal .tab {
    padding-left: 8px;
}
.strip {
    width: 14px;
    margin: 0 0 2px 1px;
    display: flex;
    flex-direction: column;
    justify-content: space-between;
    background: linear-gradient(#f0f0f0 13px, #a9c3e4 13px, #8fb0da);
}
.strip .x {
    width: 12px;
    height: 10px;
}
.strip span {
    writing-mode: vertical-rl;
    transform: rotate(180deg);
    padding-top: 2px;
}
.terminal-main {
    flex: 1;
    min-width: 0;
    display: flex;
    flex-direction: column;
    border-left: 1px solid #999;
    margin-right: 2px;
}
.sub-tabs {
    flex: none;
    display: flex;
    align-items: center;
    height: 27px;
    padding: 2px 8px 0 2px;
    border-bottom: 1px solid #222;
    font-size: 12px;
}
.sub-tabs > button {
    height: 24px;
    padding: 0 10px 0 9px;
}
.sub-tabs > button.active {
    height: 25px;
    margin-bottom: -1px;
    border: 1px solid #222;
    border-right-width: 2px;
    border-bottom: none;
    background: #fff;
}
.sub-tabs > button + button + button {
    background: linear-gradient(#888, #888) left center / 1px 11px no-repeat;
}
.links {
    margin-left: auto;
    display: flex;
    align-items: center;
    gap: 6px;
}
.signals {
    flex: 1;
    min-height: 0;
    display: flex;
    background: #fff;
}
.signal-list {
    flex: 1;
    overflow: hidden;
}
.signals table {
    width: 100%;
    table-layout: fixed;
    border-collapse: separate;
    border-spacing: 0;
    color: #222;
}
.c-spark {
    width: 126px;
}
.c-num {
    width: 150px;
}
.c-dd {
    width: 113px;
}
.c-act {
    width: 120px;
}
.signals th {
    height: 22px;
    border-right: 1px solid #e8e8e8;
    border-bottom: 1px solid #eee;
    background: #fcfdfc;
    font-weight: normal;
}
.signals th:first-child, .signals th:last-child {
    border-right: none;
}
.signals td {
    height: 52px;
    border-bottom: 1px solid #eee;
    text-align: center;
    font-size: 12px;
}
.signals .name {
    text-align: left;
    padding-left: 1px;
}
.signals td.name {
    padding-top: 12px;
    vertical-align: top;
}
.signals .spark {
    padding-left: 8px;
    text-align: left;
}
.spark svg {
    display: block;
}
.name small {
    display: block;
    margin-top: 3px;
    font-size: 11px;
    color: #999;
}
.signals em {
    font-style: normal;
    color: #b02a35;
}
.act div {
    display: flex;
    align-items: center;
    gap: 4px;
    padding-left: 7px;
}
.free {
    width: 86px;
    height: 26px;
    border: 1px solid #c4c4c4;
    color: #5cb85c;
}

/* status */
.status {
    flex: none;
    display: flex;
    align-items: center;
    height: 22px;
    padding: 2px 0 0 2px;
    border-top: 1px solid #aaa;
    position: relative;
}
.hint {
    flex: 1;
}
.cell {
    width: 65px;
    height: 18px;
    padding-left: 5px;
    border-left: 1px solid #b0b0b0;
    line-height: 18px;
}
.cell.profile {
    width: 109px;
}
.cell.date {
    width: 95px;
}
.cell.traffic {
    display: flex;
    align-items: center;
    gap: 3px;
    width: 139px;
}
.resize {
    position: absolute;
    right: 0;
    bottom: 0;
}

/* taskbar */
.taskbar {
    flex: none;
    display: flex;
    height: 39px;
    background: #050a12;
    color: #f0f0f0;
}
.taskbar > button {
    width: 46px;
    padding-bottom: 2px;
    display: flex;
    align-items: center;
    justify-content: center;
}
.taskbar .open {
    padding: 0;
    border-bottom: 2px solid #76a9d8;
    background-clip: padding-box;
    width: 38px;
    margin: 0 4px;
}
.taskbar .current {
    width: 46px;
    margin: 0;
    background: #3f4650;
}
.app {
    font: bold 11px Roboto, sans-serif;
    fill: #fff;
}
.tray {
    margin-left: auto;
    display: flex;
    align-items: center;
    padding: 0 14px 2px 0;
}
.chev {
    margin-left: 22px;
}
.batt {
    margin-left: 9px;
}
.wifi {
    margin-left: 9px;
}
.vol {
    margin: 0 9px 0 6px;
}
.lang {
    font-size: 12px;
}
.clock {
    margin-left: 12px;
    line-height: 16px;
    text-align: center;
}
.notice {
    position: relative;
    margin-left: 14px;
    color: #fff;
}
.notice svg {
    display: block;
}
.notice b {
    position: absolute;
    right: 0;
    bottom: -3px;
    width: 15px;
    height: 15px;
    border: 1px solid #777;
    border-radius: 50%;
    background: #2a2f38;
    line-height: 13px;
    font-size: 10px;
}
```
FILE: app.js
```js
var quotes = [
    ["AUDCHF", "0.71851", "0.71888", 37, 1],
    ["CADCHF", "0.75269", "0.75313", 44, 0],
    ["CHFJPY", "110.597", "110.652", 55, 1],
    ["EURCHF", "1.12990", "1.13021", 31, 1],
    ["GBPCHF", "1.31458", "1.31504", 46, 1],
    ["NZDCHF", "0.67814", "0.67865", 51, 0],
    ["EURHUF", "321.289", "321.480", 191, 0],
    ["EURPLN", "4.27874", "4.28079", 205, 1],
    ["USDCNH", "6.7183", "6.7194", 11, 1],
    ["USDPLN", "3.79446", "3.79632", 186, 0],
    ["USDRON", "4.21518", "4.22263", 745, 0],
    ["EURCZK", "25.5790", "25.6074", 284, 1],
    ["USDCZK", "22.6865", "22.7052", 187, 1],
    ["EURRUB", "72.47209", "72.49933", 2724, 1],
    ["USDRUB", "64.27650", "64.29700", 2050, 1],
    ["GOLD", "1309.110", "1309.350", 240, 1]
];
var upIcon = '<svg width="10" height="10"><path d="M5 0l5 5H7v4H3V5H0z" fill="#35b04a" stroke="#187a2c" stroke-width=".6"/></svg>';
var downIcon = '<svg width="10" height="10"><path d="M5 10l5-5H7V1H3v4H0z" fill="#ea6a32" stroke="#a83c14" stroke-width=".6"/></svg>';
document.getElementById("quotes").innerHTML = quotes.map(function (q) {
    var cls = (q[4] ? "up" : "down") + (q[0] == "GOLD" ? " gold" : "");
    return '<tr class="' + cls + '"><td>' + (q[4] ? upIcon : downIcon) + q[0] + "</td><td>" + q[1] + "</td><td>" + q[2] + "</td><td>" + q[3] + "</td></tr>";
}).join("");

var prices = ["26153.70", "26149.70", "26145.60", "26141.60", "26137.46", "26133.50", "26129.50", "26125.50", "26121.40", "26117.40", "26113.40", "26109.30", "26105.30"];
document.getElementById("prices").innerHTML = prices.map(function (p, i) {
    return "<li" + (i == 4 ? ' class="now"' : "") + ">" + p + "</li>";
}).join("");

var times = ["2019", "17:57", "18:13", "18:29", "18:45", "19:01", "19:17", "19:33", "19:49", "20:05", "20:21"];
document.getElementById("times").innerHTML = times.map(function (t) {
    return "<li>10 Apr " + t + "</li>";
}).join("");

// high, low, body top, body bottom, 1 = rising
var bars = [
    [157,240,180,228,1],[122,203,176,196,0],[179,268,198,267,0],[254,351,262,271,1],[251,286,254,262,0],[171,256,193,255,1],[178,210,194,203,0],[163,225,164,210,1],
    [86,179,87,172,1],[57,178,87,163,0],[133,205,159,202,0],[170,209,186,206,1],[148,209,190,209,0],[209,285,209,277,0],[170,262,193,261,1],[185,247,196,246,0],
    [230,304,239,265,0],[253,292,269,276,0],[249,314,260,273,1],[183,268,188,257,1],[145,192,168,191,1],[137,199,167,172,1],[129,172,133,168,1],[98,182,137,178,0],
    [144,213,145,174,1],[128,168,136,147,0],[150,234,151,219,0],[196,242,211,216,0],[196,249,219,242,0],[237,307,238,257,0],[233,281,238,249,1],[236,279,242,249,0],
    [229,276,241,245,0],[203,287,249,272,0],[211,287,214,264,1],[218,310,219,309,0],[297,355,316,316,1],[297,339,316,320,1],[293,332,304,312,1],[293,354,300,308,1],
    [273,323,297,323,0],[308,347,330,330,1],[308,339,319,324,1],[271,332,282,316,1],[217,301,266,283,1],[267,301,270,292,0],[288,376,289,372,0],[292,383,303,383,1],
    [292,338,311,314,1],[246,308,246,307,1],[201,263,201,250,1],[154,193,155,193,1],[147,186,151,162,0],[140,170,158,170,0],[101,170,154,170,1],[131,170,139,158,1],
    [123,192,139,192,0],[180,215,184,207,0],[161,200,162,199,1],[145,191,145,184,0],[177,206,180,191,1],[99,176,107,175,1],[92,138,95,100,1],[84,138,92,130,0],
    [95,138,107,123,1],[68,111,73,111,1],[23,88,57,77,1],[31,58,43,54,1],[46,135,47,118,0],[77,130,118,126,0],[118,168,130,168,0],[121,165,144,164,1],
    [121,160,140,149,1],[106,144,140,144,0],[122,156,144,152,1],[144,187,152,152,1],[129,164,148,163,0],[159,221,163,213,0],[148,213,148,205,1],[109,153,129,152,1],
    [90,157,121,144,0],[144,221,152,190,0],[121,190,129,183,1],[106,175,117,125,1],[106,137,113,121,0],[105,144,106,121,0],[98,121,113,121,1],[106,137,106,137,0],
    [128,175,136,174,0],[159,197,167,174,0],[177,213,178,213,0],[189,228,190,209,1],[174,221,185,197,0],[174,205,189,204,1],[167,193,170,193,1],[148,171,159,171,1],
    [143,175,155,160,0],[152,183,155,167,0],[144,175,163,171,0],[129,175,159,167,1],[152,190,159,159,1],[121,168,129,152,1],[122,175,122,160,0],[121,163,137,163,1],
    [121,153,129,137,1],[114,153,121,129,0],[114,151,125,126,0],[122,152,123,142,0],[127,153,144,144,1],[122,162,132,145,0],[122,146,130,145,1],[122,138,130,137,1],
    [99,130,100,123,1],[77,117,93,109,0],[93,139,112,132,0],[114,132,123,123,1],[100,132,115,131,0],[115,154,127,139,0],[123,170,139,170,0],[162,200,162,197,0],
    [173,216,192,212,0],[185,219,200,216,1],[185,231,204,223,0],[223,239,227,238,0],[238,262,241,254,0],[253,284,257,284,0],[283,330,284,306,0],[283,314,298,298,1],
    [252,313,260,298,1],[252,275,252,268,0],[229,268,237,264,1],[229,260,230,260,0],[229,254,245,253,1],[230,260,238,238,1],[222,245,226,242,1],[222,257,222,256,0],
    [230,254,253,253,1],[242,260,256,260,0],[268,295,269,280,0],[207,280,214,276,1],[203,224,210,223,1],[207,276,207,275,0],[244,284,275,283,1],[237,281,237,268,1],
    [222,249,229,240,1],[206,237,206,234,1],[175,203,175,199,1],[183,222,183,221,0],[197,237,213,229,0],[205,240,212,225,1],[190,244,205,228,0],[205,236,213,224,1],
    [213,244,216,244,0],[216,244,227,235,1],[183,225,190,224,1],[160,199,167,183,1],[152,183,160,160,1],[140,172,152,160,1],[121,156,144,155,1],[128,159,140,151,0],
    [144,171,159,163,0],[158,189,159,166,1],[150,170,154,155,0],[138,165,157,157,1],[119,154,127,154,1],[111,135,127,132,1],[111,136,127,135,1],[119,149,126,126,1],
    [125,142,134,141,0],[133,164,140,163,0],[125,163,148,156,1],[133,153,133,148,1],[129,149,130,137,0],[124,149,133,141,0]
];
var step = 3.75;
var top0 = 5;
var svg = '<path d="M0 139.5H2000" stroke="#8a9096"/>';
bars.forEach(function (b, i) {
    var x = Math.floor(i * step);
    svg += '<path d="M' + (x + .5) + " " + (b[0] - top0) + "V" + (b[1] - top0) + '" stroke="#2f9a2f"/>';
    if (b[4]) {
        svg += '<rect x="' + (x - .5) + '" y="' + (b[2] - top0 + .5) + '" width="2" height="' + Math.max(b[3] - b[2] - 1, 0) + '" fill="#0a4a0a" stroke="#2cb02c"/>';
    } else {
        svg += '<rect x="' + (x - 1) + '" y="' + (b[2] - top0) + '" width="3" height="' + Math.max(b[3] - b[2], 1) + '" fill="#7df07d"/>';
    }
});
document.getElementById("candles").innerHTML = svg;
```
